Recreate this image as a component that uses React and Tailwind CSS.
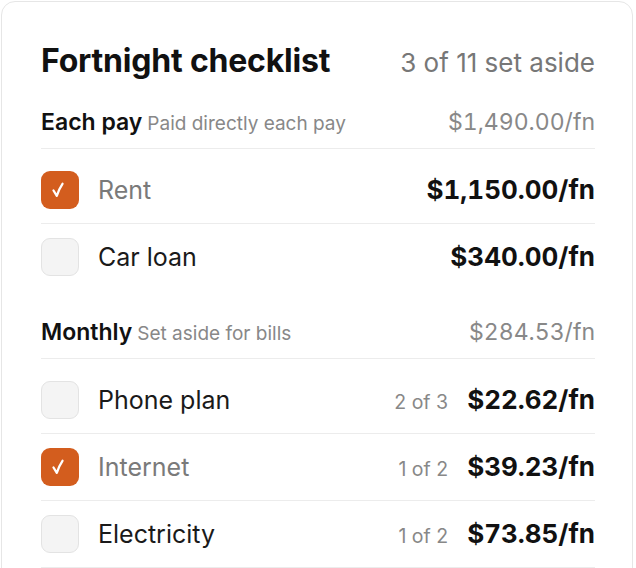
import React from 'react';

// Fortnight checklist card - grouped bills with set-aside checkboxes
const GROUPS = [
  {
    name: 'Each pay',
    note: 'Paid directly each pay',
    total: '$1,490.00/fn',
    items: [
      { label: 'Rent', amount: '$1,150.00/fn', done: true },
      { label: 'Car loan', amount: '$340.00/fn', done: false },
    ],
  },
  {
    name: 'Monthly',
    note: 'Set aside for bills',
    total: '$284.53/fn',
    items: [
      { label: 'Phone plan', amount: '$22.62/fn', progress: '2 of 3', done: false },
      { label: 'Internet', amount: '$39.23/fn', progress: '1 of 2', done: true },
      { label: 'Electricity', amount: '$73.85/fn', progress: '1 of 2', done: false },
    ],
  },
];

const Checkbox = ({ checked }) => (
  checked ? (
    <span className="w-[38px] h-[38px] shrink-0 rounded-[9px] bg-[#d35d1e] flex items-center justify-center">
      <svg width="38" height="38" viewBox="0 0 38 38" fill="none">
        <path d="M12.5 19.5 L15.8 24.8 Q18 18 21.5 12.8" stroke="white" strokeWidth="2.3" strokeLinecap="round" strokeLinejoin="round" />
      </svg>
    </span>
  ) : (
    <span className="w-[38px] h-[38px] shrink-0 rounded-[9px] bg-[#f4f4f4] border border-[#e3e3e3]" />
  )
);

const App = () => {
  return (
    <div className="min-h-screen bg-white p-px" style={{ fontFamily: 'Inter, "Noto Sans", sans-serif' }}>
      <div className="h-[620px] bg-white border border-[#e6e6e6] rounded-[14px] w-[632px] pl-[39px] pr-[37px] pt-[39px]">
        {/* Header */}
        <div className="flex items-baseline justify-between">
          <h1 className="text-[32px] leading-[40px] font-bold text-[#111] tracking-[-0.2px]">Fortnight checklist</h1>
          <span className="text-[26px] text-[#777]">3 of 11 set aside</span>
        </div>

        <div className="mt-[26px] space-y-[27px]">
          {GROUPS.map((group) => (
            <div key={group.name}>
              <div className="flex items-baseline justify-between pb-[10px] border-b border-[#ececec] leading-[28px]">
                <div className="flex items-baseline gap-[5px]">
                  <span className="text-[23px] font-semibold text-[#111]">{group.name}</span>
                  <span className="text-[19px] text-[#888]">{group.note}</span>
                </div>
                <span className="text-[23px] text-[#888] tabular-nums">{group.total}</span>
              </div>

              <div className="pt-[8px]">
                {group.items.map((item, index) => (
                  <div
                    key={item.label}
                    className={`flex items-center py-[14px] ${index < group.items.length - 1 || group.name === 'Monthly' ? 'border-b border-[#ececec]' : 'border-b border-transparent'}`}
                  >
                    <Checkbox checked={item.done} />
                    <span className={`ml-[19px] text-[25px] leading-[36px] ${item.done ? 'text-[#7a7a7a]' : 'text-[#1a1a1a]'}`}>
                      {item.label}
                    </span>
                    <div className="ml-auto flex items-baseline gap-[19px]">
                      {item.progress && <span className="text-[19.5px] text-[#888]">{item.progress}</span>}
                      <span className="text-[26px] leading-[36px] font-bold text-[#111] tabular-nums">{item.amount}</span>
                    </div>
                  </div>
                ))}
              </div>
            </div>
          ))}
        </div>
      </div>
    </div>
  );
};

export default App;
